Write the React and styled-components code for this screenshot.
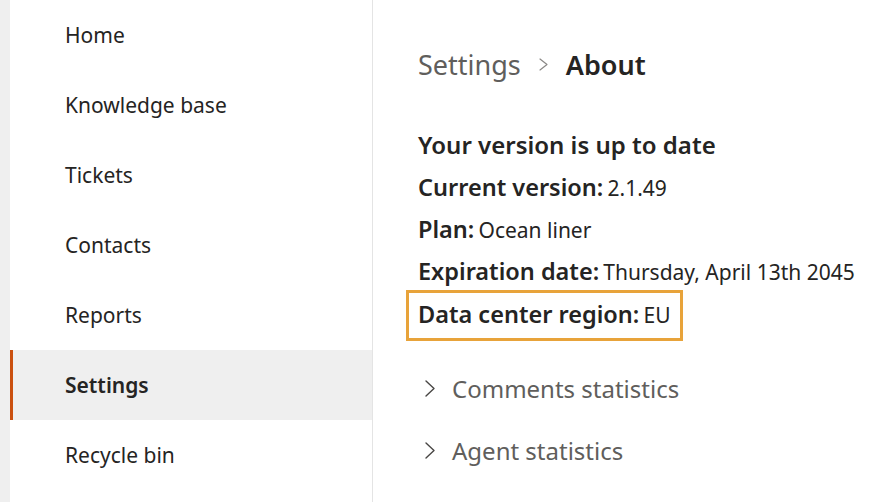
import styled, { createGlobalStyle } from "styled-components";

const GlobalStyle = createGlobalStyle`
  html, body {
    margin: 0;
    padding: 0;
    background: #ffffff;
  }
  body {
    font-family: "Noto Sans", "Open Sans", sans-serif;
    color: #252423;
  }
`;

const NAV_ITEMS = [
  "Home",
  "Knowledge base",
  "Tickets",
  "Contacts",
  "Reports",
  "Settings",
  "Recycle bin",
];

const DETAILS = [
  { label: "Current version:", value: "2.1.49" },
  { label: "Plan:", value: "Ocean liner" },
  { label: "Expiration date:", value: "Thursday, April 13th 2045" },
];

// thin right-pointing chevron, sized by the caller
function Chevron({ width, height, color, stroke = 1.3 }) {
  return (
    <svg
      width={width}
      height={height}
      viewBox={`0 0 ${width} ${height}`}
      fill="none"
    >
      <path
        d={`M1 1L${width - 1} ${height / 2}L1 ${height - 1}`}
        stroke={color}
        strokeWidth={stroke}
        strokeLinecap="round"
        strokeLinejoin="round"
      />
    </svg>
  );
}

function App() {
  return (
    <>
      <GlobalStyle />
      <Page>
        <Rail />
        <SideNav>
          {NAV_ITEMS.map((item) => (
            <NavItem key={item} $active={item === "Settings"}>
              {item}
            </NavItem>
          ))}
        </SideNav>
        <Main>
          <Breadcrumb>
            <Crumb>Settings</Crumb>
            <Chevron width={9} height={13} color="#8a8886" stroke={1.2} />
            <CurrentCrumb>About</CurrentCrumb>
          </Breadcrumb>
          <Details>
            <Heading>Your version is up to date</Heading>
            {DETAILS.map((d) => (
              <DetailRow key={d.label}>
                <Label>{d.label}</Label> <Value>{d.value}</Value>
              </DetailRow>
            ))}
            <Highlight>
              <DetailRow>
                <Label>Data center region:</Label> <Value>EU</Value>
              </DetailRow>
            </Highlight>
          </Details>
          <Sections>
            <SectionToggle>
              <Chevron width={10} height={17} color="#484644" stroke={1.4} />
              <span>Comments statistics</span>
            </SectionToggle>
            <SectionToggle>
              <Chevron width={10} height={17} color="#484644" stroke={1.4} />
              <span>Agent statistics</span>
            </SectionToggle>
          </Sections>
        </Main>
      </Page>
    </>
  );
}

export default App;

const Page = styled.div`
  display: flex;
  height: 502px;
  overflow: hidden;
`;

const Rail = styled.div`
  width: 10px;
  flex-shrink: 0;
  background: #efefef;
`;

const SideNav = styled.nav`
  width: 362px;
  flex-shrink: 0;
  display: flex;
  flex-direction: column;
  border-right: 1px solid #e4e4e4;
`;

const NavItem = styled.div`
  height: 70px;
  display: flex;
  align-items: center;
  padding-left: 52px;
  font-size: 21px;
  font-weight: ${(p) => (p.$active ? 600 : 400)};
  color: #252423;
  background: ${(p) => (p.$active ? "#efefef" : "transparent")};
  border-left: 3px solid ${(p) => (p.$active ? "#ca5010" : "transparent")};
`;

const Main = styled.main`
  flex: 1;
  padding: 44px 0 0 45px;
`;

const Breadcrumb = styled.div`
  display: flex;
  align-items: center;
  gap: 18px;
  height: 40px;
  font-size: 27px;
`;

const Crumb = styled.span`
  color: #605e5c;
`;

const CurrentCrumb = styled.span`
  font-weight: 600;
  color: #252423;
`;

const Details = styled.div`
  margin-top: 40px;
  display: flex;
  flex-direction: column;
  align-items: flex-start;
`;

const Heading = styled.div`
  height: 42px;
  line-height: 42px;
  font-size: 24px;
  font-weight: 600;
  white-space: nowrap;
`;

const DetailRow = styled.div`
  height: 42px;
  line-height: 42px;
  white-space: nowrap;
`;

const Label = styled.span`
  font-size: 23.5px;
  font-weight: 600;
`;

const Value = styled.span`
  font-size: 21px;
`;

const Highlight = styled.div`
  margin: -2px 0 0 -12px;
  padding: 0 9px 3px 9px;
  border: 3px solid #e8a33a;
`;

const Sections = styled.div`
  margin-top: 16px;
  display: flex;
  flex-direction: column;
`;

const SectionToggle = styled.div`
  height: 62px;
  display: flex;
  align-items: center;
  gap: 17px;
  padding-left: 7px;
  font-size: 24px;
  color: #605e5c;
`;
